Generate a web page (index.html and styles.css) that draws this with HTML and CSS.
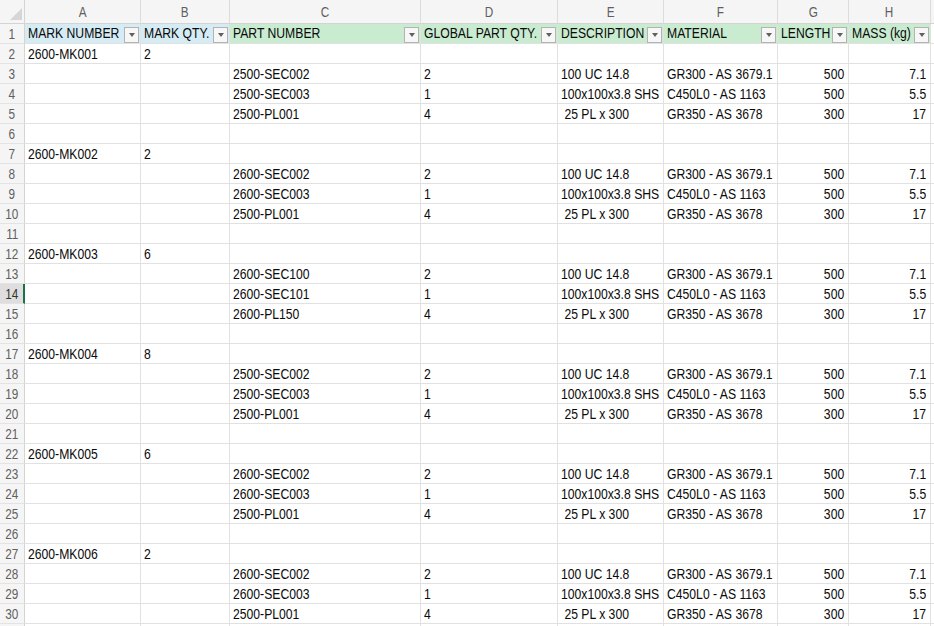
FILE: index.html
```html
<!DOCTYPE html>
<html>
<head>
<meta charset="utf-8">
<link rel="stylesheet" href="styles.css">
</head>
<body>
<div class="sheet">
  <div class="corner"><svg width="12" height="12" viewBox="0 0 12 12"><polygon points="12,0 12,12 0,12" fill="#d6d6d6"/></svg></div>
  <div class="ch"><span class="n">A</span></div><div class="ch"><span class="n">B</span></div><div class="ch"><span class="n">C</span></div><div class="ch"><span class="n">D</span></div><div class="ch"><span class="n">E</span></div><div class="ch"><span class="n">F</span></div><div class="ch"><span class="n">G</span></div><div class="ch"><span class="n">H</span></div><div class="ch"></div>

  <div class="rh"><span class="n">1</span></div>
  <div class="hd blue"><span class="t"><span class="n">MARK NUMBER</span></span><span class="fb"></span></div>
  <div class="hd blue"><span class="t"><span class="n">MARK QTY.</span></span><span class="fb"></span></div>
  <div class="hd green"><span class="t"><span class="n">PART NUMBER</span></span><span class="fb"></span></div>
  <div class="hd green"><span class="t"><span class="n">GLOBAL PART QTY.</span></span><span class="fb"></span></div>
  <div class="hd green"><span class="t"><span class="n">DESCRIPTION</span></span><span class="fb"></span></div>
  <div class="hd green"><span class="t"><span class="n">MATERIAL</span></span><span class="fb"></span></div>
  <div class="hd green"><span class="t"><span class="n">LENGTH</span></span><span class="fb"></span></div>
  <div class="hd green"><span class="t"><span class="n">MASS (kg)</span></span><span class="fb"></span></div>
  <div class="c"></div>

  <div class="rh"><span class="n">2</span></div><div class="c"><span class="n">2600-MK001</span></div><div class="c"><span class="n">2</span></div><div class="c"></div><div class="c"></div><div class="c"></div><div class="c"></div><div class="c"></div><div class="c"></div><div class="c"></div>
  <div class="rh"><span class="n">3</span></div><div class="c"></div><div class="c"></div><div class="c"><span class="n">2500-SEC002</span></div><div class="c"><span class="n">2</span></div><div class="c"><span class="n">100 UC 14.8</span></div><div class="c"><span class="n">GR300 - AS 3679.1</span></div><div class="c r"><span class="n">500</span></div><div class="c r"><span class="n">7.1</span></div><div class="c"></div>
  <div class="rh"><span class="n">4</span></div><div class="c"></div><div class="c"></div><div class="c"><span class="n">2500-SEC003</span></div><div class="c"><span class="n">1</span></div><div class="c"><span class="n">100x100x3.8 SHS</span></div><div class="c"><span class="n">C450L0 - AS 1163</span></div><div class="c r"><span class="n">500</span></div><div class="c r"><span class="n">5.5</span></div><div class="c"></div>
  <div class="rh"><span class="n">5</span></div><div class="c"></div><div class="c"></div><div class="c"><span class="n">2500-PL001</span></div><div class="c"><span class="n">4</span></div><div class="c"><span class="n"> 25 PL x 300</span></div><div class="c"><span class="n">GR350 - AS 3678</span></div><div class="c r"><span class="n">300</span></div><div class="c r"><span class="n">17</span></div><div class="c"></div>
  <div class="rh"><span class="n">6</span></div><div class="c"></div><div class="c"></div><div class="c"></div><div class="c"></div><div class="c"></div><div class="c"></div><div class="c"></div><div class="c"></div><div class="c"></div>

  <div class="rh"><span class="n">7</span></div><div class="c"><span class="n">2600-MK002</span></div><div class="c"><span class="n">2</span></div><div class="c"></div><div class="c"></div><div class="c"></div><div class="c"></div><div class="c"></div><div class="c"></div><div class="c"></div>
  <div class="rh"><span class="n">8</span></div><div class="c"></div><div class="c"></div><div class="c"><span class="n">2600-SEC002</span></div><div class="c"><span class="n">2</span></div><div class="c"><span class="n">100 UC 14.8</span></div><div class="c"><span class="n">GR300 - AS 3679.1</span></div><div class="c r"><span class="n">500</span></div><div class="c r"><span class="n">7.1</span></div><div class="c"></div>
  <div class="rh"><span class="n">9</span></div><div class="c"></div><div class="c"></div><div class="c"><span class="n">2600-SEC003</span></div><div class="c"><span class="n">1</span></div><div class="c"><span class="n">100x100x3.8 SHS</span></div><div class="c"><span class="n">C450L0 - AS 1163</span></div><div class="c r"><span class="n">500</span></div><div class="c r"><span class="n">5.5</span></div><div class="c"></div>
  <div class="rh"><span class="n">10</span></div><div class="c"></div><div class="c"></div><div class="c"><span class="n">2500-PL001</span></div><div class="c"><span class="n">4</span></div><div class="c"><span class="n"> 25 PL x 300</span></div><div class="c"><span class="n">GR350 - AS 3678</span></div><div class="c r"><span class="n">300</span></div><div class="c r"><span class="n">17</span></div><div class="c"></div>
  <div class="rh"><span class="n">11</span></div><div class="c"></div><div class="c"></div><div class="c"></div><div class="c"></div><div class="c"></div><div class="c"></div><div class="c"></div><div class="c"></div><div class="c"></div>

  <div class="rh"><span class="n">12</span></div><div class="c"><span class="n">2600-MK003</span></div><div class="c"><span class="n">6</span></div><div class="c"></div><div class="c"></div><div class="c"></div><div class="c"></div><div class="c"></div><div class="c"></div><div class="c"></div>
  <div class="rh"><span class="n">13</span></div><div class="c"></div><div class="c"></div><div class="c"><span class="n">2600-SEC100</span></div><div class="c"><span class="n">2</span></div><div class="c"><span class="n">100 UC 14.8</span></div><div class="c"><span class="n">GR300 - AS 3679.1</span></div><div class="c r"><span class="n">500</span></div><div class="c r"><span class="n">7.1</span></div><div class="c"></div>
  <div class="rh active"><span class="n">14</span></div><div class="c"></div><div class="c"></div><div class="c"><span class="n">2600-SEC101</span></div><div class="c"><span class="n">1</span></div><div class="c"><span class="n">100x100x3.8 SHS</span></div><div class="c"><span class="n">C450L0 - AS 1163</span></div><div class="c r"><span class="n">500</span></div><div class="c r"><span class="n">5.5</span></div><div class="c"></div>
  <div class="rh"><span class="n">15</span></div><div class="c"></div><div class="c"></div><div class="c"><span class="n">2600-PL150</span></div><div class="c"><span class="n">4</span></div><div class="c"><span class="n"> 25 PL x 300</span></div><div class="c"><span class="n">GR350 - AS 3678</span></div><div class="c r"><span class="n">300</span></div><div class="c r"><span class="n">17</span></div><div class="c"></div>
  <div class="rh"><span class="n">16</span></div><div class="c"></div><div class="c"></div><div class="c"></div><div class="c"></div><div class="c"></div><div class="c"></div><div class="c"></div><div class="c"></div><div class="c"></div>

  <div class="rh"><span class="n">17</span></div><div class="c"><span class="n">2600-MK004</span></div><div class="c"><span class="n">8</span></div><div class="c"></div><div class="c"></div><div class="c"></div><div class="c"></div><div class="c"></div><div class="c"></div><div class="c"></div>
  <div class="rh"><span class="n">18</span></div><div class="c"></div><div class="c"></div><div class="c"><span class="n">2500-SEC002</span></div><div class="c"><span class="n">2</span></div><div class="c"><span class="n">100 UC 14.8</span></div><div class="c"><span class="n">GR300 - AS 3679.1</span></div><div class="c r"><span class="n">500</span></div><div class="c r"><span class="n">7.1</span></div><div class="c"></div>
  <div class="rh"><span class="n">19</span></div><div class="c"></div><div class="c"></div><div class="c"><span class="n">2500-SEC003</span></div><div class="c"><span class="n">1</span></div><div class="c"><span class="n">100x100x3.8 SHS</span></div><div class="c"><span class="n">C450L0 - AS 1163</span></div><div class="c r"><span class="n">500</span></div><div class="c r"><span class="n">5.5</span></div><div class="c"></div>
  <div class="rh"><span class="n">20</span></div><div class="c"></div><div class="c"></div><div class="c"><span class="n">2500-PL001</span></div><div class="c"><span class="n">4</span></div><div class="c"><span class="n"> 25 PL x 300</span></div><div class="c"><span class="n">GR350 - AS 3678</span></div><div class="c r"><span class="n">300</span></div><div class="c r"><span class="n">17</span></div><div class="c"></div>
  <div class="rh"><span class="n">21</span></div><div class="c"></div><div class="c"></div><div class="c"></div><div class="c"></div><div class="c"></div><div class="c"></div><div class="c"></div><div class="c"></div><div class="c"></div>

  <div class="rh"><span class="n">22</span></div><div class="c"><span class="n">2600-MK005</span></div><div class="c"><span class="n">6</span></div><div class="c"></div><div class="c"></div><div class="c"></div><div class="c"></div><div class="c"></div><div class="c"></div><div class="c"></div>
  <div class="rh"><span class="n">23</span></div><div class="c"></div><div class="c"></div><div class="c"><span class="n">2600-SEC002</span></div><div class="c"><span class="n">2</span></div><div class="c"><span class="n">100 UC 14.8</span></div><div class="c"><span class="n">GR300 - AS 3679.1</span></div><div class="c r"><span class="n">500</span></div><div class="c r"><span class="n">7.1</span></div><div class="c"></div>
  <div class="rh"><span class="n">24</span></div><div class="c"></div><div class="c"></div><div class="c"><span class="n">2600-SEC003</span></div><div class="c"><span class="n">1</span></div><div class="c"><span class="n">100x100x3.8 SHS</span></div><div class="c"><span class="n">C450L0 - AS 1163</span></div><div class="c r"><span class="n">500</span></div><div class="c r"><span class="n">5.5</span></div><div class="c"></div>
  <div class="rh"><span class="n">25</span></div><div class="c"></div><div class="c"></div><div class="c"><span class="n">2500-PL001</span></div><div class="c"><span class="n">4</span></div><div class="c"><span class="n"> 25 PL x 300</span></div><div class="c"><span class="n">GR350 - AS 3678</span></div><div class="c r"><span class="n">300</span></div><div class="c r"><span class="n">17</span></div><div class="c"></div>
  <div class="rh"><span class="n">26</span></div><div class="c"></div><div class="c"></div><div class="c"></div><div class="c"></div><div class="c"></div><div class="c"></div><div class="c"></div><div class="c"></div><div class="c"></div>

  <div class="rh"><span class="n">27</span></div><div class="c"><span class="n">2600-MK006</span></div><div class="c"><span class="n">2</span></div><div class="c"></div><div class="c"></div><div class="c"></div><div class="c"></div><div class="c"></div><div class="c"></div><div class="c"></div>
  <div class="rh"><span class="n">28</span></div><div class="c"></div><div class="c"></div><div class="c"><span class="n">2600-SEC002</span></div><div class="c"><span class="n">2</span></div><div class="c"><span class="n">100 UC 14.8</span></div><div class="c"><span class="n">GR300 - AS 3679.1</span></div><div class="c r"><span class="n">500</span></div><div class="c r"><span class="n">7.1</span></div><div class="c"></div>
  <div class="rh"><span class="n">29</span></div><div class="c"></div><div class="c"></div><div class="c"><span class="n">2600-SEC003</span></div><div class="c"><span class="n">1</span></div><div class="c"><span class="n">100x100x3.8 SHS</span></div><div class="c"><span class="n">C450L0 - AS 1163</span></div><div class="c r"><span class="n">500</span></div><div class="c r"><span class="n">5.5</span></div><div class="c"></div>
  <div class="rh"><span class="n">30</span></div><div class="c"></div><div class="c"></div><div class="c"><span class="n">2500-PL001</span></div><div class="c"><span class="n">4</span></div><div class="c"><span class="n"> 25 PL x 300</span></div><div class="c"><span class="n">GR350 - AS 3678</span></div><div class="c r"><span class="n">300</span></div><div class="c r"><span class="n">17</span></div><div class="c"></div>
  <div class="rh"></div><div class="c"></div><div class="c"></div><div class="c"></div><div class="c"></div><div class="c"></div><div class="c"></div><div class="c"></div><div class="c"></div><div class="c"></div>
</div>
</body>
</html>
```

FILE: styles.css
```css
html, body {
  margin: 0;
  padding: 0;
  background: #ffffff;
  overflow: hidden;
  width: 934px;
  height: 626px;
}

.sheet {
  display: grid;
  grid-template-columns: 25px 116px 89px 191px 137px 106px 114px 71px 82px 40px;
  grid-template-rows: 24px;
  grid-auto-rows: 20px;
  font-family: "Liberation Sans", Arial, sans-serif;
  font-size: 14.5px;
  color: #0a0a0a;
}

.sheet > div {
  box-sizing: border-box;
  border-right: 1px solid #e1e1e1;
  border-bottom: 1px solid #e1e1e1;
  overflow: hidden;
  white-space: pre;
}

/* narrow text: the sheet font is a condensed face */
.n {
  display: inline-block;
  transform: scaleX(0.84);
  transform-origin: left center;
  white-space: pre;
}

.c.r .n {
  transform-origin: right center;
}

.ch .n,
.rh .n {
  transform-origin: center center;
}

.corner {
  background: #f5f5f5;
  display: flex;
  align-items: flex-end;
  justify-content: flex-end;
  padding: 0 2px 3px 0;
  border-right-color: #d4d4d4 !important;
  border-bottom-color: #d4d4d4 !important;
}

.corner svg {
  display: block;
}

.ch {
  background: #f5f5f5;
  color: #5f5f5f;
  font-size: 14px;
  display: flex;
  align-items: center;
  justify-content: center;
  border-right-color: #dcdcdc !important;
  border-bottom-color: #d4d4d4 !important;
}

.rh {
  background: #f5f5f5;
  color: #5f5f5f;
  font-size: 14px;
  line-height: 20px;
  text-align: center;
  border-right-color: #d4d4d4 !important;
  border-bottom-color: #e3e3e3 !important;
}

.rh.active {
  background: #dedede;
  color: #333333;
  border-right: 2px solid #1e7145 !important;
}

.c {
  line-height: 19px;
  padding: 1px 3px 0 3px;
}

.c.r {
  text-align: right;
  padding-right: 4px;
}

.hd {
  display: flex;
  align-items: flex-end;
  padding: 0 1px 0 3px;
  line-height: 19px;
}

.hd .t {
  flex: 1;
  min-width: 0;
  overflow: hidden;
  padding-top: 1px;
}

.blue {
  background: #d6ecf4;
}

.green {
  background: #c9ecd1;
}

.fb {
  flex: none;
  box-sizing: border-box;
  width: 15px;
  height: 16px;
  border: 1px solid #b3b3b3;
  background: #f7f7f7;
  display: flex;
  align-items: center;
  justify-content: center;
}

.fb::after {
  content: "";
  width: 0;
  height: 0;
  border-left: 3.5px solid transparent;
  border-right: 3.5px solid transparent;
  border-top: 4px solid #606060;
}
```
